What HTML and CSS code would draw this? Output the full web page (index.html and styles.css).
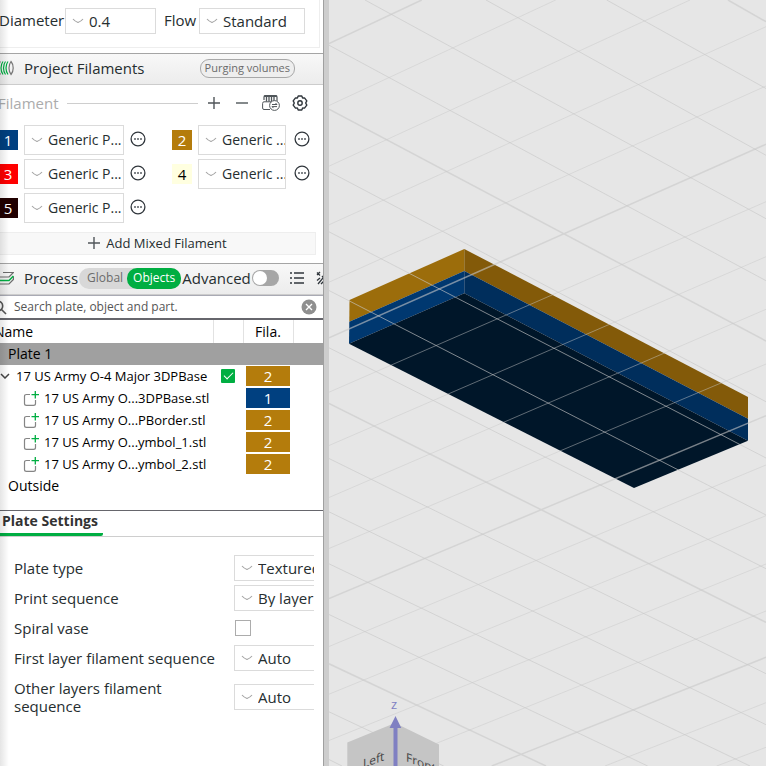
FILE: index.html
```
<!DOCTYPE html>
<html lang="en">
<head>
<meta charset="utf-8">
<title>Slicer</title>
<link rel="stylesheet" href="styles.css">
</head>
<body>
<svg class="defs" aria-hidden="true">
  <symbol id="chevron" viewBox="0 0 12 6"><path d="M1 1 Q3 3.4 6 4.5 Q9 3.4 11 1" fill="none" stroke="#a3a3a3" stroke-width="1.1"/></symbol>
  <symbol id="more" viewBox="0 0 16 16"><circle cx="8" cy="8" r="6.9" fill="none" stroke="#30363c" stroke-width="1.3"/><path d="M4.2 7.2h1.6v1.6h-1.6zM7.2 7.2h1.6v1.6h-1.6zM10.2 7.2h1.6v1.6h-1.6z" fill="#30363c"/></symbol>
  <symbol id="plus" viewBox="0 0 12 12"><path d="M6 0v12M0 6h12" stroke="#50565a" stroke-width="1.4"/></symbol>
  <symbol id="part" viewBox="0 0 16 16"><path d="M7 4.500H3.500Q1.500 4.500 1.500 6.500V13.500Q1.500 15.400 3.500 15.400H10.500Q12.500 15.400 12.500 13.500V10" fill="none" stroke="#858585" stroke-width="1.2"/><path d="M12.300 1v7.500M8.500 4.700h7.500" stroke="#00ae42" stroke-width="1.3"/></symbol>
</svg>
<div class="app">
  <aside class="sidebar">
    <section class="nozzle">
      <div class="nozzle-card">
        <label for="diameter">Diameter</label>
        <span class="combo diameter"><svg><use href="#chevron"/></svg><select id="diameter"><option>0.4</option></select></span>
        <label class="flow-label" for="flow">Flow</label>
        <span class="combo flow"><svg><use href="#chevron"/></svg><select id="flow"><option>Standard</option></select></span>
      </div>
    </section>

    <header class="bar">
      <svg class="bar-icon" viewBox="0 0 16 16" fill="none" stroke-width="1.200"><path d="M2.500 1.500Q.5 4 .5 8T2.500 14.500M13 1.500Q11 4 11 8t2 6.500q2.200-2.500 2.200-6.500T13 1.500z" stroke="#777"/><path d="M5 1.500Q3 4 3 8t2 6.500M7.500 1.500Q5.500 4 5.500 8t2 6.500M10 1.500Q8 4 8 8t2 6.500" stroke="#00ae42"/></svg>
      <h2>Project Filaments</h2>
      <button class="pill" type="button">Purging volumes</button>
    </header>

    <section class="filaments">
      <div class="filament-tools">
        <span>Filament</span><i class="rule"></i>
        <button type="button" aria-label="Add filament"><svg width="12" height="12"><use href="#plus"/></svg></button>
        <button type="button" aria-label="Remove filament"><svg width="12" height="12" viewBox="0 0 12 12"><path d="M0 6h12" stroke="#50565a" stroke-width="1.400"/></svg></button>
        <button type="button" aria-label="Sync filaments"><svg width="18" height="16" viewBox="0 0 18 16" fill="none" stroke="#50565a"><path d="M2 5V2Q2 .7 3.300 .7H13.700Q15 .7 15 2V6" stroke-width="1.200"/><path d="M2 1.200H15" stroke-width="1.600"/><path d="M4.500 2v4.500M7 2v4.500M9.500 2v4.500M12 2v4" stroke-width="1.300"/><path d="M8 14.500H2Q.6 14.500 .6 13V8.500Q.6 6.800 2 6.800H9.500"/><circle cx="12.500" cy="10.500" r="4.900" fill="#fff"/><path d="M10 9.500h5l-1.500-1.500M15 11.600h-5l1.500 1.500"/></svg></button>
        <button type="button" aria-label="Filament settings"><svg width="16" height="16" viewBox="0 0 16 16" fill="none" stroke="#30363c" stroke-width="1.400" stroke-linejoin="round"><path d="M6.200 1H9.800L10.600 3 12.500 2.900 14.800 5.900 13.700 8 14.800 10.100 12.500 13.100 10.600 13 9.800 15H6.200L5.400 13 3.500 13.100 1.200 10.100 2.300 8 1.200 5.900 3.500 2.900 5.400 3z"/><circle cx="8" cy="8" r="2.200"/></svg></button>
      </div>
      <div class="filament-grid">
        <span class="swatch blue">1</span><span class="combo"><svg><use href="#chevron"/></svg><select aria-label="Filament 1"><option>Generic P...</option></select></span><button type="button" aria-label="Edit filament 1"><svg><use href="#more"/></svg></button>
        <span class="swatch gold">2</span><span class="combo"><svg><use href="#chevron"/></svg><select aria-label="Filament 2"><option>Generic ...</option></select></span><button type="button" aria-label="Edit filament 2"><svg><use href="#more"/></svg></button>
        <span class="swatch red">3</span><span class="combo"><svg><use href="#chevron"/></svg><select aria-label="Filament 3"><option>Generic P...</option></select></span><button type="button" aria-label="Edit filament 3"><svg><use href="#more"/></svg></button>
        <span class="swatch cream">4</span><span class="combo"><svg><use href="#chevron"/></svg><select aria-label="Filament 4"><option>Generic ...</option></select></span><button type="button" aria-label="Edit filament 4"><svg><use href="#more"/></svg></button>
        <span class="swatch dark">5</span><span class="combo"><svg><use href="#chevron"/></svg><select aria-label="Filament 5"><option>Generic P...</option></select></span><button type="button" aria-label="Edit filament 5"><svg><use href="#more"/></svg></button>
      </div>
      <button class="add-mixed" type="button"><svg width="12" height="12"><use href="#plus"/></svg>Add Mixed Filament</button>
    </section>

    <header class="bar process">
      <svg class="bar-icon" viewBox="0 0 16 16" fill="none" stroke="#6b6b6b" stroke-width="1.200"><path d="M5 2.500H15.400L11 7H0M0 14H11L15.400 9.500V6.500"/><path d="M0 10.500H11L15.400 6" stroke="#00ae42" stroke-width="1.500"/></svg>
      <h2>Process</h2>
      <div class="segmented"><button type="button">Global</button><button class="on" type="button">Objects</button></div>
      <label for="advanced">Advanced</label>
      <input class="switch" id="advanced" type="checkbox">
      <button class="list-button" type="button" aria-label="Parameter list"><svg width="14" height="14" viewBox="0 0 14 14" stroke="#30363c" stroke-width="1.500"><path d="M0 2h2M4 2h10M0 7h2M4 7h10M0 12h2M4 12h10"/></svg></button>
      <button class="tool-button" type="button" aria-label="Compare presets"><svg width="14" height="14" viewBox="0 0 14 14" fill="none" stroke="#30363c" stroke-width="1.300"><path d="M1 1.500L4 4.500M4 1L1 4M6 5l7 8M2 13L12 1M1 9.500L4 7M5 13l4-4"/></svg></button>
    </header>

    <div class="search">
      <svg width="15" height="15" viewBox="0 0 15 15" fill="none" stroke="#555" stroke-width="1.600"><circle cx="6" cy="6" r="4.700"/><path d="M9.500 9.500L14 14"/></svg>
      <input type="text" aria-label="Search" placeholder="Search plate, object and part.">
      <button type="button" aria-label="Clear search"><svg width="16" height="16" viewBox="0 0 16 16"><circle cx="8" cy="8" r="7.500" fill="#8f8f8f"/><path d="M5 5l6 6M11 5l-6 6" stroke="#fff" stroke-width="1.400"/></svg></button>
    </div>

    <div class="tree">
      <table>
        <colgroup><col class="c-name"><col class="c-check"><col class="c-fila"><col></colgroup>
        <thead><tr><th>Name</th><th></th><th class="fila-head">Fila.</th><th></th></tr></thead>
        <tbody>
          <tr class="plate"><td colspan="4"><span class="plate-name">Plate 1</span></td></tr>
          <tr><td><span class="object"><svg width="10" height="6" viewBox="0 0 10 6"><path d="M1 1l4 4 4-4" fill="none" stroke="#444" stroke-width="1.500"/></svg>17 US Army O-4 Major 3DPBase</span></td><td><input class="tick" type="checkbox" checked aria-label="Printable"></td><td><span class="tag gold">2</span></td><td></td></tr>
          <tr><td><span class="part"><svg><use href="#part"/></svg>17 US Army O...3DPBase.stl</span></td><td></td><td><span class="tag blue">1</span></td><td></td></tr>
          <tr><td><span class="part"><svg><use href="#part"/></svg>17 US Army O...PBorder.stl</span></td><td></td><td><span class="tag gold">2</span></td><td></td></tr>
          <tr><td><span class="part"><svg><use href="#part"/></svg>17 US Army O...ymbol_1.stl</span></td><td></td><td><span class="tag gold">2</span></td><td></td></tr>
          <tr><td><span class="part"><svg><use href="#part"/></svg>17 US Army O...ymbol_2.stl</span></td><td></td><td><span class="tag gold">2</span></td><td></td></tr>
          <tr><td colspan="4"><span class="plate-name">Outside</span></td></tr>
        </tbody>
      </table>
    </div>

    <div class="tabs"><button type="button">Plate Settings</button></div>

    <section class="settings">
      <label for="plate-type">Plate type</label><span class="combo"><svg><use href="#chevron"/></svg><select id="plate-type"><option>Textured PEI Plate</option></select></span>
      <label for="sequence">Print sequence</label><span class="combo"><svg><use href="#chevron"/></svg><select id="sequence"><option>By layer</option></select></span>
      <label for="vase">Spiral vase</label><input class="box" id="vase" type="checkbox">
      <label for="first">First layer filament sequence</label><span class="combo"><svg><use href="#chevron"/></svg><select id="first"><option>Auto</option></select></span>
      <label for="other">Other layers filament sequence</label><span class="combo"><svg><use href="#chevron"/></svg><select id="other"><option>Auto</option></select></span>
    </section>
  </aside>

  <main class="viewport">
    <svg class="scene" viewBox="-1 0 437 766" preserveAspectRatio="xMinYMin slice" role="img" aria-label="Build plate">
      <g>
        <path fill="#9c6d0b" d="M19.500 300L134.300 249V271L19.300 321.700z"/>
        <path fill="#835a09" d="M134.300 249L418 397V418.700L134.300 271z"/>
        <path fill="#003870" d="M19.300 321.700L134.300 271V293.300L19 343.700z"/>
        <path fill="#002e5c" d="M134.300 271L418 418.700V440.700L134.300 293.300z"/>
        <path fill="#001629" d="M19 343.700L134.300 293.300 418 440.700 304 488z"/>
      </g>
      <g fill="none" stroke="#c8c8c8">
        <path stroke-width=".8" stroke-opacity=".8" d="M276.700 0L436 88.500M156 0L436 155.300M35 0L436 218.700M-1 45.200L436 280.700M-1 171.500L436 401.700M-1 231.800L436 458M-1 290.500L436 515M-1 347.800L436 568.700M-1 458.500L436 673.700M-1 511.800L436 724.700M-1 563.800L420 766M-1 614.500L317.700 766M-1 711.800L113.700 766M-1 759.500L12 766"/>
        <path stroke-width=".8" stroke-opacity=".6" d="M-1 105.500L225.700 0M-1 166.200L360 0M-1 224.800L436 26.700M-1 282.200L436 86M-1 392.200L436 201.700M-1 445.500L436 256.700M-1 497.500L436 309.300M-1 548.500L436 364M-1 646.500L436 465M-1 694.200L436 515.700M-1 740.500L436 564M50 766L436 611M275 766L436 702.700M386.700 766L436 747.300"/>
        <path stroke-width="1.500" stroke-opacity=".6" d="M398 0L436 21.700M-1 109.200L436 341M-1 403.500L436 622.300M-1 663.800L216 766M-1 43.500L91.700 0M-1 337.800L436 144.300M-1 598.500L436 415.700M161.700 766L436 657.300"/>
      </g>
      <g>
        <path fill="#c5c5c5" d="M17.300 742.500L65 723 109 744.500V800H17.300z"/>
        <text class="face" transform="translate(33 768) skewY(-20)">Left</text>
        <text class="face" transform="translate(76 761) skewY(22)">Front</text>
        <path fill="#8080c2" d="M65.500 716L71.300 728H67.500V800H63.500V728H59.500z"/>
        <text class="axis" x="61" y="709">z</text>
      </g>
    </svg>
  </main>
</div>
</body>
</html>
```
FILE: styles.css
```
* { box-sizing: border-box; }
body { margin: 0; font: 15px/18px "Open Sans", sans-serif; color: #262e30; background: #fff; }
button { border: 0; padding: 0; background: none; font: inherit; color: inherit; }
button svg { display: block; }
h2 { margin: 0; font-size: 15px; line-height: 18px; font-weight: 400; }
.defs { position: absolute; width: 0; height: 0; }
.app { display: flex; min-height: 100vh; }
.sidebar { position: relative; flex: 0 0 329px; overflow: hidden; border-right: 5px solid #cdcdcd; }
.sidebar::before { content: ""; position: absolute; inset: 0 0 0 auto; width: 1px; background: #a0a0a0; }
.sidebar::after { content: ""; position: absolute; inset: 0 auto 0 0; width: 9px; background: linear-gradient(90deg, rgba(0,0,0,.1), rgba(0,0,0,0)); pointer-events: none; }
.viewport { flex: 1; min-width: 0; background: #e6e6e6; height: 100vh; }
.scene { display: block; width: 100%; height: 100%; }
.face { font-size: 12px; fill: #444; }
.axis { font-size: 13px; fill: #8080c2; }

.combo { display: flex; align-items: center; position: relative; height: 26px; border: 1px solid #dbdbdb; background: #fff; overflow: hidden; }
.combo svg { position: absolute; left: 6px; width: 12px; height: 6px; pointer-events: none; }
.combo select { width: 100%; height: 100%; appearance: none; border: 0; padding: 0 0 1px 23px; background: none; font: inherit; color: inherit; outline: 0; }

.nozzle { height: 53px; padding-right: 4px; }
.nozzle-card { display: flex; align-items: center; height: 48px; padding: 0 14px 5px 0; margin-left: -1px; border: solid #eee; border-width: 0 1px 1px 0; }
.nozzle-card label { width: 66px; padding-bottom: 2px; }
.nozzle-card .flow-label { width: 35px; margin-left: 8px; }
.diameter { width: 91px; }
.flow { flex: 1; }

.bar { display: flex; align-items: center; height: 32px; padding: 0 28px 2px 0; border: solid #a5a5a5; border-width: 1px 0; border-bottom-color: #ccc; background: linear-gradient(#f8f8f8, #ececec); margin-right: 1px; }
.bar-icon { flex: none; width: 16px; height: 16px; margin: 0 10px 0 -2px; }
.pill { margin-left: auto; height: 19px; padding: 0 4px; border: 1px solid #a8a8a8; border-radius: 9px; font-size: 11px; line-height: 16px; color: #6b6b6b; background: #eee; }

.filaments { padding: 0 8px 8px 0; }
.filament-tools { display: flex; align-items: center; height: 36px; color: #acacac; margin-left: -2px; }
.filament-tools button { margin-left: 16px; }
.filament-tools button:nth-of-type(3) { margin-left: 14px; }
.filament-tools button:nth-of-type(4) { margin: 0 8px 0 12px; }
.rule { flex: 1; height: 1px; margin: 0 -6px 0 8px; background: #cecece; }
.filament-grid { display: grid; grid-template-columns: 20px 100px 16px 40px 88px 16px; column-gap: 6px; row-gap: 4px; align-items: center; margin: 4px 0 9px -2px; }
.filament-grid button { margin-top: -2px; }
.filament-grid button svg { width: 16px; height: 16px; }
.filament-grid .combo { height: 30px; font-size: 14px; }
.filament-grid button:nth-child(6n) { margin-left: 2px; }
.swatch { justify-self: end; width: 20px; height: 20px; line-height: 20px; text-align: center; font-size: 15px; color: #fff; }
.blue { background: #004080; }
.gold { background: #b47c0c; }
.red { background: #f00; }
.cream { background: #ffffe0; color: #000; }
.dark { background: #200000; }
.add-mixed { display: flex; align-items: center; justify-content: center; gap: 6px; width: 100%; height: 23px; padding-bottom: 2px; border: 1px solid #eee; border-left: 0; background: #f8f8f8; font-size: 13px; }

.process { padding-right: 0; }
.segmented { display: flex; flex: none; height: 21px; margin: 0 1px; border-radius: 10px; background: #d8d8d8; font-size: 12px; color: #6b6b6b; }
.segmented button { padding: 0 4px 0 8px; }
.segmented .on { padding: 0 6px; border-radius: 10px; background: #00ae42; color: #fff; }
.process label, .process h2 { flex: none; }
.switch { appearance: none; flex: none; display: flex; align-items: center; width: 27px; height: 16px; margin: 0 0 0 1px; padding: 1px; border-radius: 8px; background: #a6a6a6; }
.switch::before { content: ""; width: 14px; height: 14px; border-radius: 50%; background: #fff; }
.list-button { margin-left: 11px; }
.tool-button { margin-left: 12px; }

.search { display: flex; align-items: center; height: 23px; padding-right: 6px; border: solid #a9aab4; border-width: 1px 1px 0 0; background: #fff; }
.search svg { flex: none; }
.search > svg { margin: 0 7px 0 -8px; }
.search input { flex: 1; min-width: 0; border: 0; padding: 0; outline: 0; background: none; font: 12px/16px "Open Sans", sans-serif; }
.search ::placeholder { color: #555; opacity: 1; }

.tree { height: 193px; border: solid #66666c; border-width: 2px 1px 1px 0; color: #000; font-size: 14px; }
table { width: 100%; border-collapse: collapse; table-layout: fixed; }
.c-name { width: 213px; }
.c-check { width: 30px; }
.c-fila { width: 50px; }
th { height: 23px; padding: 0; text-align: left; font-weight: 400; border-right: 1px solid #e2e2e2; }
th:first-child { text-indent: -6px; }
th:last-child { border: 0; }
.fila-head { text-align: center; }
td { height: 22px; padding: 0; white-space: nowrap; }
.plate { background: #a0a0a0; }
.plate-name { padding-left: 8px; }
.object, .part { display: flex; align-items: center; font-size: 13px; }
.object svg { margin-right: 6px; }
.part { padding-left: 23px; }
.part svg { width: 16px; height: 16px; margin-right: 5px; }
.tag { display: block; height: 20px; margin: 0 3px; line-height: 20px; text-align: center; font-size: 15px; color: #fff; }
.tick { appearance: none; display: grid; place-items: center; width: 14px; height: 14px; margin: 0 0 0 8px; border-radius: 1px; background: #00ae42; }
.tick::before { content: ""; width: 8px; height: 4px; margin-top: -3px; border: solid #fff; border-width: 0 0 1px 1px; transform: rotate(-45deg); }

.tabs { height: 26px; border-bottom: 1px solid #cecece; }
.tabs button { height: 25px; padding: 0 5px 2px 2px; border-bottom: 3px solid #00ae42; border-radius: 0 0 2px 0; font-weight: 700; font-size: 14px; color: #333; }

.settings { display: grid; grid-template-columns: 220px 1fr; row-gap: 4px; align-items: center; padding: 18px 10px 0 14px; }
.settings .combo { border-right: 0; }
.settings select { width: 160px; flex: none; }
.box { appearance: none; width: 16px; height: 16px; margin: 5px 1px; border: 1px solid #acacac; background: #fff; }
.settings label:last-of-type { padding-right: 40px; margin-top: 4px; }
.settings .combo:last-child { margin-top: 4px; }
```
